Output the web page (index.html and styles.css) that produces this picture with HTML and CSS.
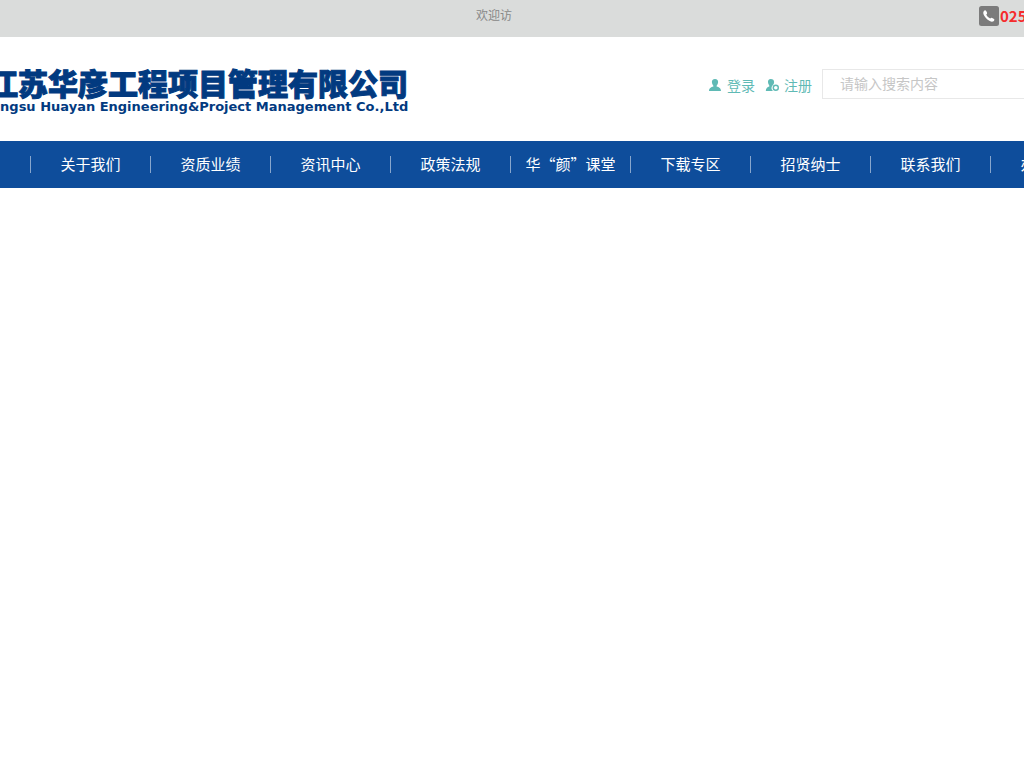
FILE: index.html
```html
<!DOCTYPE html>
<html lang="zh-CN">
<head>
<meta charset="utf-8">
<title>江苏华彦工程项目管理有限公司</title>
<link rel="stylesheet" href="styles.css">
</head>
<body>
<div class="topbar">
  <div class="wrap topbar-inner">
    <p class="welcome">欢迎访</p>
    <p class="phone">
      <svg class="phone-icon" viewBox="0 0 20 20" aria-hidden="true"><rect width="20" height="20" rx="2.5" fill="#7b7b7b"/><path d="M5 4.8Q6.3 3.6 7.2 5L8.1 6.8Q8.4 7.7 7.2 8.7Q8.5 11.2 11.2 12.6Q12.3 11.4 13.2 12L15 13.1Q15.9 13.9 14.9 14.9Q13.2 16.3 10.8 15Q6.2 12.6 4.4 8Q3.9 6 5 4.8Z" fill="#fff"/></svg>
      <strong>025</strong>
    </p>
  </div>
</div>
<header class="header">
  <div class="wrap header-inner">
    <a class="logo" href="#">
      <span class="logo-cn">江苏华彦工程项目管理有限公司</span>
      <span class="logo-en">Jiangsu Huayan Engineering&amp;Project Management Co.,Ltd</span>
    </a>
    <div class="tools">
      <a class="account" href="#"><svg viewBox="0 0 14 14" aria-hidden="true"><path d="M7 1C4.8 1 3.7 2.6 3.9 4.3C4.1 6 5 7.5 5.4 7.8V8.5C3 9.2 1 10 1 13H13C13 10 11 9.2 8.6 8.5V7.8C9 7.5 9.9 6 10.1 4.3C10.3 2.6 9.2 1 7 1Z"/></svg>登录</a>
      <a class="account" href="#"><svg viewBox="0 0 14 14" aria-hidden="true"><path d="M5.8 1C3.7 1 2.8 2.6 3 4.3C3.2 6 4 7 4.3 7.5V8.5C2.3 9.3.8 10 .8 13H8A4.2 4.2 0 0 1 7.7 7.2C8.8 6.3 9.1 5.3 9.1 4.1C9.1 2.3 7.9 1 5.8 1Z"/><circle cx="10.8" cy="9.8" r="2.5" fill="none" stroke="#5fbab5" stroke-width="1.4"/></svg>注册</a>
      <input class="search" type="search" placeholder="请输入搜索内容" aria-label="请输入搜索内容">
    </div>
  </div>
</header>
<nav class="nav">
  <ul class="menu">
    <li><a href="#">首页</a></li>
    <li><a href="#">关于我们</a></li>
    <li><a href="#">资质业绩</a></li>
    <li><a href="#">资讯中心</a></li>
    <li><a href="#">政策法规</a></li>
    <li><a href="#">华“颜”课堂</a></li>
    <li><a href="#">下载专区</a></li>
    <li><a href="#">招贤纳士</a></li>
    <li><a href="#">联系我们</a></li>
    <li><a href="#">办公系统</a></li>
  </ul>
</nav>
</body>
</html>
```
FILE: styles.css
```css
* { box-sizing: border-box; }
body {
  margin: 0;
  overflow-x: hidden;
  background: #fff;
  font-family: "Noto Sans CJK SC", sans-serif;
  font-size: 14px;
}
p, ul { margin: 0; padding: 0; }
a { text-decoration: none; color: inherit; }
.topbar, .header, .nav { display: flex; justify-content: center; overflow: hidden; }
.wrap { flex: 0 0 1200px; display: flex; justify-content: space-between; }
.topbar { background: #dadcdb; height: 37px; }
.topbar-inner { padding-top: 6px; }
.welcome { width: 600px; text-align: right; font-size: 12px; line-height: 18px; color: #888; }
.phone { display: flex; align-items: center; gap: 1px; width: 133px; height: 20px; font-size: 15px; line-height: 20px; color: #f52c2c; }
.phone-icon { width: 20px; height: 20px; flex: none; }
.header-inner { height: 104px; padding-top: 29px; }
.logo { display: flex; flex-direction: column; margin-left: 76px; color: #023a80; white-space: nowrap; }
.logo-cn { font-weight: 900; font-size: 30px; line-height: 32px; -webkit-text-stroke: 1px #023a80; }
.logo-en { font-family: "DejaVu Sans", sans-serif; font-weight: bold; font-size: 13px; line-height: 18px; margin-left: -6px; }
.tools { display: flex; align-items: flex-start; width: 404px; padding-top: 3px; }
.account { display: flex; align-items: center; gap: 5px; margin-right: 10px; line-height: 32px; color: #5fbab5; white-space: nowrap; }
.account svg { width: 14px; height: 14px; fill: #5fbab5; }
.search { flex: 1; min-width: 0; height: 30px; border: 1px solid #e8e8e8; padding: 0 17px 2px; font: inherit; background: #fff; }
.search::placeholder { color: #c6c6c6; opacity: 1; }
.nav { background: #0e4d9b; padding: 15px 0; }
.menu { flex: 0 0 1202px; display: flex; list-style: none; }
.menu li { flex: 0 0 120px; height: 17px; line-height: 15px; border-right: 1px solid #87a6cd; text-align: center; font-size: 15px; color: #fff; white-space: nowrap; }
```
